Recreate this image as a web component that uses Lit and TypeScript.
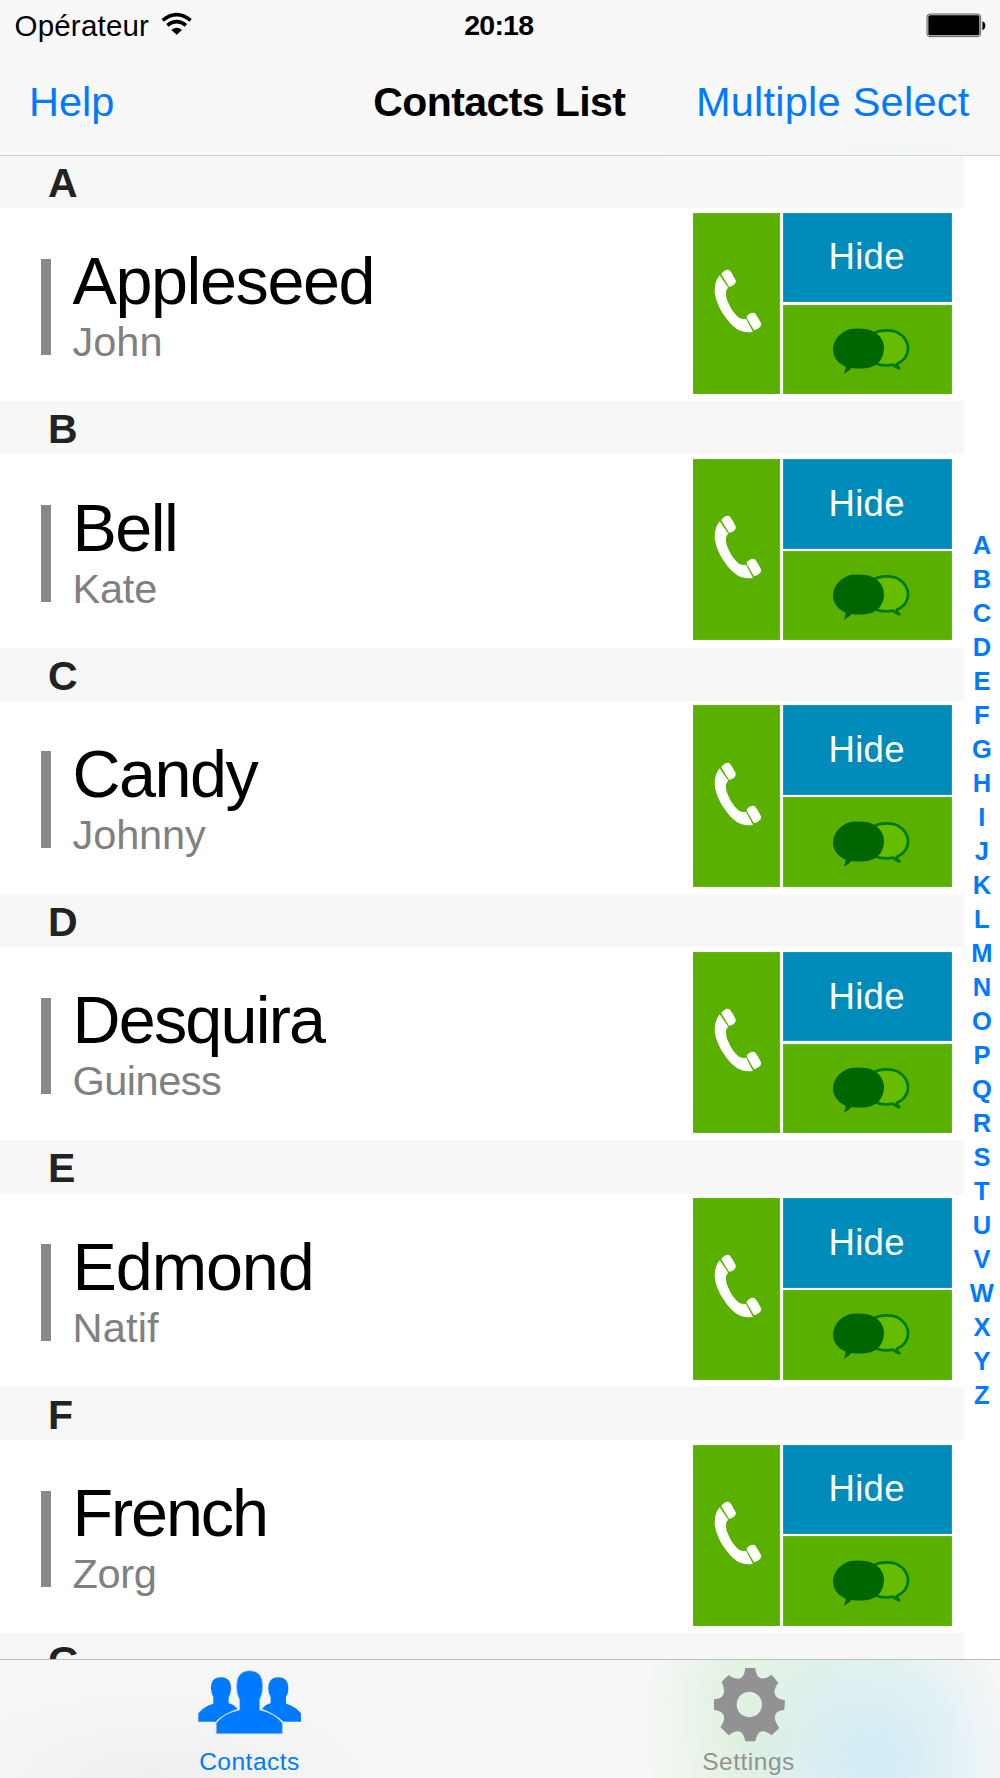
import { LitElement, html, css, svg } from "lit";
import { customElement, property } from "lit/decorators.js";

interface Contact {
  last: string;
  first: string;
  tracking: number;
  firstTracking: number;
}

const CONTACTS: Contact[] = [
  { last: "Appleseed", first: "John", tracking: -1.4, firstTracking: 0 },
  { last: "Bell", first: "Kate", tracking: -1.5, firstTracking: -0.2 },
  { last: "Candy", first: "Johnny", tracking: -1.5, firstTracking: -0.1 },
  { last: "Desquira", first: "Guiness", tracking: -1.8, firstTracking: -0.5 },
  { last: "Edmond", first: "Natif", tracking: -1.1, firstTracking: 0.2 },
  { last: "French", first: "Zorg", tracking: -2.1, firstTracking: -0.3 },
];

const LETTERS = "ABCDEFGHIJKLMNOPQRSTUVWXYZ".split("");

const wifiIcon = svg`<svg class="wifi" viewBox="484 36 94 70">
  <g fill="none" stroke="#000" stroke-width="10.500">
    <path d="M489 61 Q531 27 573 61" />
    <path d="M503 76 Q531 54 559 76" />
  </g>
  <path d="M515 90 Q531 77 547 90 L531 104 Z" />
</svg>`;

const batteryIcon = svg`<svg class="battery" viewBox="1280 37 182 75">
  <rect x="1283" y="40" width="161" height="68" rx="9" fill="#ddd" stroke="#444" stroke-width="2.500" />
  <rect x="1287" y="44" width="153" height="60" rx="5" />
  <path d="M1449 62 Q1458 65 1458 75 Q1458 85 1449 88 Z" />
</svg>`;

const phoneIcon = svg`<svg class="phone" viewBox="40 54 150 198" fill="#fff">
  <path d="M60 76 Q44 96 45 126 Q49 160 71 193 Q97 234 124 243 Q142 249 160 246 L139 206 Q126 210 115 201 Q98 186 88 163 Q77 142 79 126 Q80 117 86 113 Z" />
  <path d="M65 73 Q65 68 75 62 Q84 57 91 62 Q101 75 108 91 Q110 99 102 105 Q93 111 88 110 Z" />
  <path d="M141 203 Q140 197 150 191 Q160 186 167 191 Q177 204 184 220 Q186 228 178 234 Q169 240 163 241 Z" />
</svg>`;

const chatIcon = svg`<svg class="chat" viewBox="36 34 236 144">
  <path d="M165 51 C180 43 212 41 232 50 C255 62 266 84 264 101 C263 120 250 136 230 145 Q232 153 238 158 Q228 157 219 147 C200 151 180 149 165 142 Z" fill="#66bc00" stroke="#007a05" stroke-width="8" stroke-linejoin="round" />
  <path d="M90 40 Q118 37 142 41 C176 49 193 74 192 99 C191 129 174 149 146 156 Q120 161 94 157 Q88 166 71 174 Q77 164 77 153 C53 143 40 125 39 103 C39 75 58 51 90 40 Z" fill="#006600" />
</svg>`;

const peopleIcon = svg`<svg class="people" viewBox="50 145 322 205" fill="#007aff">
  <path d="M102 233 Q96 222 95 208 Q93 174 125 173 Q156 174 155 208 Q155 222 148 233 V251 Q164 255 175 268 Q135 280 109 306 H57 V281 Q74 260 102 252 Z" />
  <path d="M274 233 Q267 222 267 208 Q266 174 297 173 Q328 174 327 208 Q327 222 320 233 V252 Q348 260 365 281 V306 H312 Q285 280 248 268 Q258 255 274 251 Z" />
  <path d="M181 240 Q171 222 172 198 Q172 154 211 153 Q250 154 250 198 Q250 222 241 240 V271 Q285 280 309 310 V342 H111 V310 Q135 280 181 271 Z" stroke="#8fc3fb" stroke-width="2" />
</svg>`;

const gearIcon = svg`<svg class="gear" viewBox="156 140 226 232" fill="#929292">
  <path fill-rule="evenodd" d="M256 146 H286 Q288 174 303 177 Q316 180 335 166 L355 190 Q338 214 346 227 Q352 240 375 242 L373 272 Q351 273 346 286 Q340 301 358 326 L335 348 Q314 332 302 337 Q291 341 286 366 H256 Q251 341 240 337 Q226 333 206 348 L181 323 Q196 303 191 288 Q186 274 162 272 V240 Q185 238 190 226 Q196 213 185 187 L206 167 Q226 181 239 178 Q253 174 256 146 Z M268 217 A38 38.500 0 1 0 268.100 217 Z" />
</svg>`;

@customElement("contact-section")
class ContactSection extends LitElement {
  @property({ attribute: false }) contact!: Contact;

  static styles = css`
    :host { display: block; height: 193.240px; background: #fff; }
    .row { display: flex; height: 100%; box-sizing: border-box; padding: 4.600px 12px 7.240px 41px; }
    .bar { width: 10px; height: 96.600px; margin-top: 46px; background: #888; }
    .names { flex: 1; padding: 32.500px 0 0 21.500px; white-space: nowrap; }
    .last { font-size: 66.500px; line-height: 72px; color: #000; }
    .first { font-size: 41.500px; line-height: 49px; color: #808080; }
    .actions { display: grid; grid-template-columns: 87px 169.300px; grid-template-rows: 1fr 1fr; gap: 2.500px; width: 258.800px; }
    .call, .hide, .message { display: flex; align-items: center; justify-content: center; box-sizing: border-box; }
    .call { grid-row: 1 / 3; background: #5ab000; border: 1px solid #62b90d; padding: 0 0 5px 3px; }
    .hide { background: #008cba; border: 1px solid #1c97c0; color: #fff; font-size: 36.500px; padding: 0 1px 0 0; letter-spacing: 0.300px; }
    .message { background: #5ab000; border: 1px solid #62b90d; padding-left: 8px; padding-top: 3px; }
    .phone { width: 50px; height: 66px; }
    .chat { width: 78.700px; height: 48px; }
  `;

  render() {
    const c = this.contact;
    return html`<div class="row">
      <div class="bar"></div>
      <div class="names">
        <div class="last" style="letter-spacing:${c.tracking}px">${c.last}</div>
        <div class="first" style="letter-spacing:${c.firstTracking}px">${c.first}</div>
      </div>
      <div class="actions">
        <div class="call">${phoneIcon}</div>
        <div class="hide">Hide</div>
        <div class="message">${chatIcon}</div>
      </div>
    </div>`;
  }
}

@customElement("app-root")
class AppRoot extends LitElement {
  static styles = css`
    :host { display: flex; flex-direction: column; height: 1778px; width: 1000px; overflow: hidden; background: #fff; font-family: "Liberation Sans", Arial, sans-serif; color: #000; }
    .top { height: 155.600px; flex: none; box-sizing: border-box; border-bottom: 1.500px solid #d0d0d0; background: radial-gradient(ellipse 240px 34px at 900px 156px, #f3f6f6, #f8f8f8); }
    .status { display: grid; grid-template-columns: 1fr auto 1fr; align-items: center; height: 51px; padding: 0 13px 0 14.500px; font-size: 29.500px; }
    .carrier { display: flex; align-items: center; gap: 12px; letter-spacing: 0.200px; }
    .wifi { width: 31.300px; height: 23.300px; margin-top: -4px; }
    .time { font-weight: bold; font-size: 28.500px; letter-spacing: -0.800px; margin: 0 2px 0 -2px; }
    .battery { width: 60.700px; height: 25px; justify-self: end; margin-top: -1px; }
    .nav { display: grid; grid-template-columns: 1fr auto 1fr; align-items: center; height: 102px; padding: 0 30.500px 0 29px; font-size: 41.500px; color: #007aff; }
    .title { font-weight: bold; font-size: 41px; color: #000; letter-spacing: -0.600px; }
    .select { justify-self: end; letter-spacing: 0.250px; }
    .main { flex: 1; min-height: 0; display: flex; overflow: hidden; }
    .list { width: 963.800px; flex: none; margin-top: -0.600px; }
    .heading { height: 53.140px; line-height: 56.500px; box-sizing: border-box; padding-left: 48px; background: #f7f7f7; color: #222; font-weight: bold; font-size: 41px; }
    .index { width: 36.200px; display: flex; flex-direction: column; align-items: center; padding-top: 372.500px; color: #007aff; font-weight: bold; font-size: 25.500px; line-height: 34.010px; }
    .tabs { flex: none; display: flex; height: 119px; box-sizing: border-box; border-top: 1.500px solid #b9bcb9; padding-right: 2px;
      background:
        radial-gradient(ellipse 150px 140px at 875px 100px, #d0ecf5 5%, #d0ecf500),
        radial-gradient(ellipse 110px 170px at 750px 80px, #dff1dd 5%, #dff1dd00),
        radial-gradient(ellipse 190px 120px at 820px 0px, #e6f3ea, #e6f3ea00),
        radial-gradient(ellipse 250px 100px at 150px 118px, #efefef, #efefef00),
        #f7f7f7; }
    .tab { flex: 1; display: flex; flex-direction: column; align-items: center; font-size: 24.500px; line-height: 28px; letter-spacing: 0.500px; color: #929292; }
    .active { color: #007aff; }
    .glyph { height: 88px; display: flex; align-items: center; }
    .people { width: 107.300px; height: 68.300px; margin: -3px 0 0 1px; }
    .gear { width: 75.300px; height: 77.300px; margin: 1px 0 0 2px; }
  `;

  render() {
    return html`
      <div class="top">
        <div class="status">
          <div class="carrier"><span>Opérateur</span>${wifiIcon}</div>
          <div class="time">20:18</div>
          ${batteryIcon}
        </div>
        <div class="nav">
          <div class="help">Help</div>
          <div class="title">Contacts List</div>
          <div class="select">Multiple Select</div>
        </div>
      </div>
      <div class="main">
        <div class="list">
          ${CONTACTS.map((c) => html`
            <div class="heading">${c.last[0]}</div>
            <contact-section .contact=${c}></contact-section>`)}
          <div class="heading">G</div>
        </div>
        <div class="index">${LETTERS.map((l) => html`<div>${l}</div>`)}</div>
      </div>
      <div class="tabs">
        <div class="tab active"><div class="glyph">${peopleIcon}</div>Contacts</div>
        <div class="tab"><div class="glyph">${gearIcon}</div>Settings</div>
      </div>`;
  }
}
